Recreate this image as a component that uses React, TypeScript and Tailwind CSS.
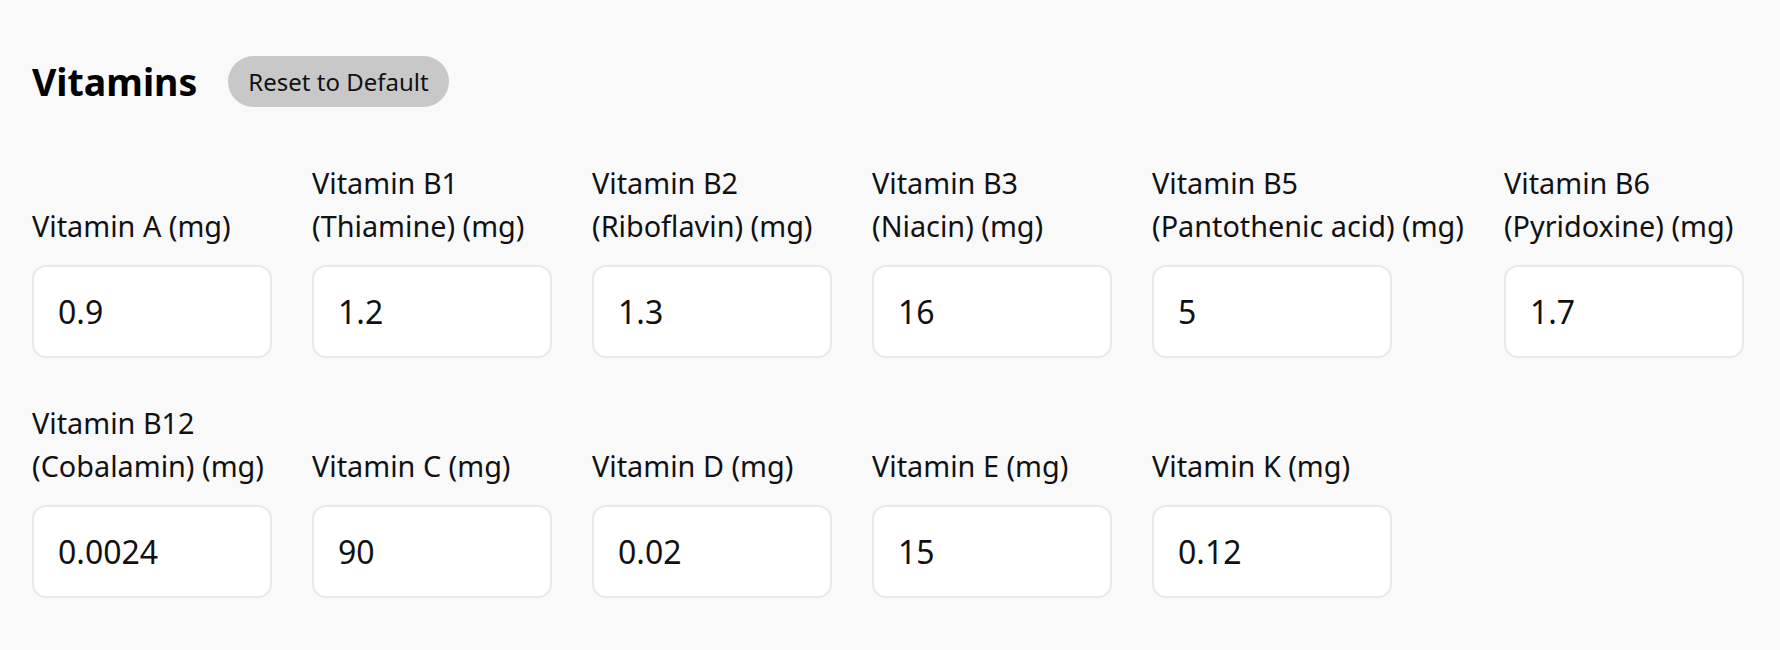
import { useState } from "react";

type Vitamin = {
  key: string;
  label: string[];
  value: string;
};

const DEFAULTS: Vitamin[] = [
  { key: "a", label: ["Vitamin A (mg)"], value: "0.9" },
  { key: "b1", label: ["Vitamin B1", "(Thiamine) (mg)"], value: "1.2" },
  { key: "b2", label: ["Vitamin B2", "(Riboflavin) (mg)"], value: "1.3" },
  { key: "b3", label: ["Vitamin B3", "(Niacin) (mg)"], value: "16" },
  { key: "b5", label: ["Vitamin B5", "(Pantothenic acid) (mg)"], value: "5" },
  { key: "b6", label: ["Vitamin B6", "(Pyridoxine) (mg)"], value: "1.7" },
  { key: "b12", label: ["Vitamin B12", "(Cobalamin) (mg)"], value: "0.0024" },
  { key: "c", label: ["Vitamin C (mg)"], value: "90" },
  { key: "d", label: ["Vitamin D (mg)"], value: "0.02" },
  { key: "e", label: ["Vitamin E (mg)"], value: "15" },
  { key: "k", label: ["Vitamin K (mg)"], value: "0.12" },
];

export default function App() {
  const [values, setValues] = useState<Record<string, string>>(
    Object.fromEntries(DEFAULTS.map((v) => [v.key, v.value]))
  );

  const reset = () => setValues(Object.fromEntries(DEFAULTS.map((v) => [v.key, v.value])));

  return (
    <div
      className="min-h-[650px] bg-[#f9f9f9] px-[32px] pt-[56px] text-[#111]"
      style={{ fontFamily: '"Noto Sans", "Open Sans", sans-serif' }}
    >
      {/* header */}
      <div className="flex items-center gap-[31px]">
        <h2 className="text-[37.5px] font-bold leading-none text-black">Vitamins</h2>
        <button
          onClick={reset}
          className="h-[51px] rounded-full bg-[#c8c8c8] px-[20px] text-[24px] text-[#111]"
        >
          Reset to Default
        </button>
      </div>

      {/* fields */}
      <div className="mt-[54px] flex flex-wrap items-end gap-x-[40px] gap-y-[43px]">
        {DEFAULTS.map((v) => (
          <div key={v.key} className="flex min-w-[240px] flex-col gap-[18px]">
            <label htmlFor={v.key} className="text-[28.8px] leading-[43px] whitespace-nowrap">
              {v.label.map((line) => (
                <div key={line}>{line}</div>
              ))}
            </label>
            <input
              id={v.key}
              type="text"
              value={values[v.key]}
              onChange={(e) => setValues({ ...values, [v.key]: e.target.value })}
              className="h-[93px] w-[240px] rounded-[14px] border-2 border-[#e9e9e6] bg-white px-[24px] text-[32px] text-[#111] outline-none"
            />
          </div>
        ))}
      </div>
    </div>
  );
}
